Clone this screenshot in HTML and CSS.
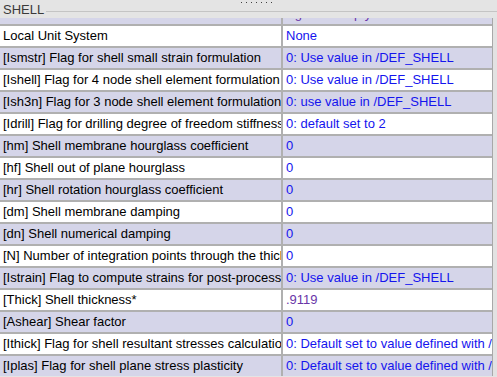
FILE: index.html
```html
<!DOCTYPE html>
<html lang="en">
<head>
  <meta charset="UTF-8">
  <title>SHELL</title>
  <link rel="stylesheet" href="styles.css">
</head>
<body>
  <div class="panel">
    <div class="grip"></div>
    <div class="title">
      <span>SHELL</span>
      <div class="title-line"></div>
    </div>
    <div class="body">
      <div class="grid">
        <div class="cell alt partial"></div>
        <div class="cell alt partial"><span class="val purple">Ag shell emp y</span></div>

        <div class="cell">Local Unit System</div>
        <div class="cell val">None</div>

        <div class="cell alt">[Ismstr] Flag for shell small strain formulation</div>
        <div class="cell alt val">0: Use value in /DEF_SHELL</div>

        <div class="cell">[Ishell] Flag for 4 node shell element formulation</div>
        <div class="cell val">0: Use value in /DEF_SHELL</div>

        <div class="cell alt">[Ish3n] Flag for 3 node shell element formulation</div>
        <div class="cell alt val">0: use value in /DEF_SHELL</div>

        <div class="cell">[Idrill] Flag for drilling degree of freedom stiffness</div>
        <div class="cell val">0: default set to 2</div>

        <div class="cell alt">[hm] Shell membrane hourglass coefficient</div>
        <div class="cell alt val">0</div>

        <div class="cell">[hf] Shell out of plane hourglass</div>
        <div class="cell val">0</div>

        <div class="cell alt">[hr] Shell rotation hourglass coefficient</div>
        <div class="cell alt val">0</div>

        <div class="cell">[dm] Shell membrane damping</div>
        <div class="cell val">0</div>

        <div class="cell alt">[dn] Shell numerical damping</div>
        <div class="cell alt val">0</div>

        <div class="cell">[N] Number of integration points through the thickness</div>
        <div class="cell val">0</div>

        <div class="cell alt">[Istrain] Flag to compute strains for post-processing</div>
        <div class="cell alt val">0: Use value in /DEF_SHELL</div>

        <div class="cell">[Thick] Shell thickness*</div>
        <div class="cell val purple">.9119</div>

        <div class="cell alt">[Ashear] Shear factor</div>
        <div class="cell alt val">0</div>

        <div class="cell">[Ithick] Flag for shell resultant stresses calculation</div>
        <div class="cell val">0: Default set to value defined with /DEF_SHELL</div>

        <div class="cell alt">[Iplas] Flag for shell plane stress plasticity</div>
        <div class="cell alt val">0: Default set to value defined with /DEF_SHELL</div>
      </div>
      <div class="scroll"></div>
    </div>
  </div>
</body>
</html>
```

FILE: styles.css
```css
body {
    margin: 0;
    font-family: "Liberation Sans", Arial, sans-serif;
    font-size: 13px;
    background-color: #e4e4e4;
}
.panel {
    position: relative;
    width: 497px;
    height: 377px;
    overflow: hidden;
    background-color: #e4e4e4;
}
.grip {
    position: absolute;
    top: 2px;
    left: 241px;
    width: 34px;
    height: 1px;
    background: repeating-linear-gradient(to right, #404040 0, #404040 1px, transparent 1px, transparent 5px);
}
.title {
    display: flex;
    align-items: center;
    height: 18px;
    padding-left: 3px;
    color: #3a3a3a;
}
.title span {
    line-height: 18px;
    padding-top: 1px;
}
.title-line {
    flex: 1;
    height: 1px;
    margin-left: 2px;
    margin-top: 5px;
    background-color: #c4c4c4;
}
.body {
    display: flex;
}
.grid {
    display: grid;
    grid-template-columns: 281px 209px;
    grid-template-rows: 6px;
    grid-auto-rows: 20px;
    column-gap: 2px;
    row-gap: 2px;
    width: 492px;
    background-color: #b0b0b0;
}
.cell {
    padding-left: 3px;
    line-height: 20px;
    white-space: nowrap;
    overflow: hidden;
    background-color: #ffffff;
    color: #000000;
}
.cell.alt {
    background-color: #d5d5e9;
}
.cell.partial {
    height: 6px;
}
.cell.partial span {
    display: block;
    margin-top: -14px;
}
.val {
    color: #1414ee;
}
.purple {
    color: #6a35a8;
}
.scroll {
    width: 4px;
    border-left: 1px solid #a8a8a8;
    background-color: #e2e2e2;
}
```
